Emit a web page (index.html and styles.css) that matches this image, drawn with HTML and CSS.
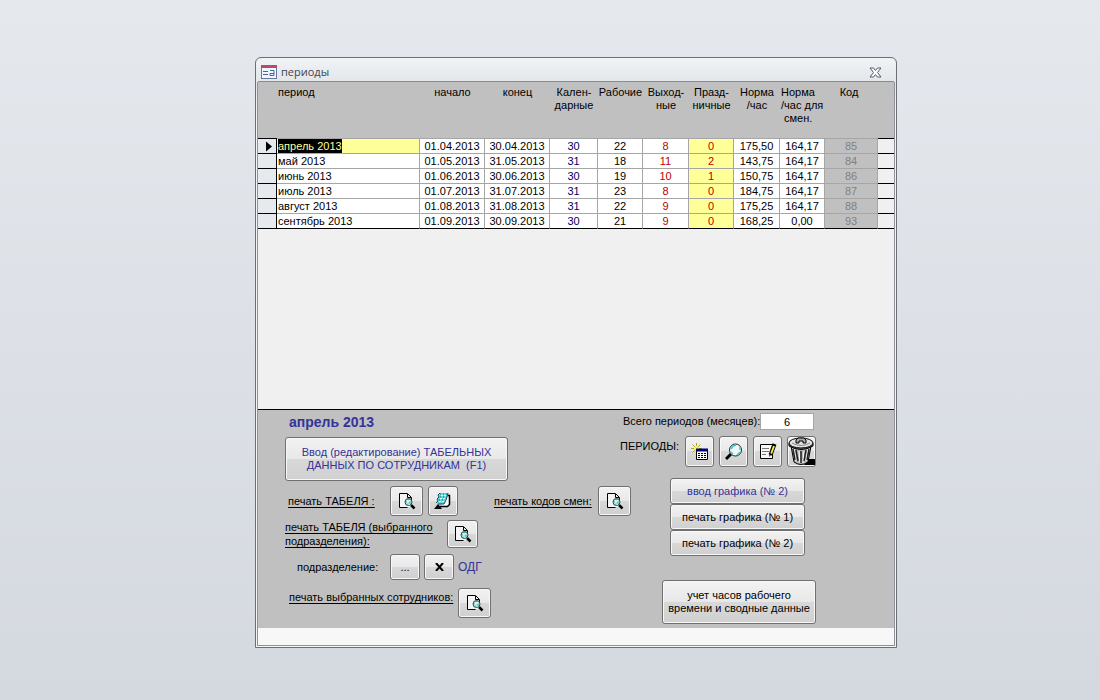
FILE: index.html
```html
<!DOCTYPE html>
<html lang="ru">
<head>
<meta charset="utf-8">
<title>периоды</title>
<link rel="stylesheet" href="styles.css">
</head>
<body>
<svg class="defs" aria-hidden="true">
  <symbol id="preview" viewBox="0 0 18 18">
    <path d="M1.500 1.500H9.500L13.500 5.500V8M1.500 1.500V15.500H9.500" fill="none" stroke="#000"/>
    <path d="M2 2H9V6H13V15H2Z" fill="#f4f4f4"/>
    <path d="M9.500 2V5.500H13" fill="none" stroke="#000"/>
    <path d="M13 13L16.500 16.500" stroke="#000" stroke-width="2.500"/>
    <circle cx="10.500" cy="10" r="3.500" fill="#a9dedd" stroke="#2c4b4b"/>
    <path d="M8 11L12 8M9 8H10M11 12H12" stroke="#fff"/>
    <path d="M9 7.500H12M8 10H9M11 11H13" stroke="#18b9b9"/>
  </symbol>
</svg>
<main class="window">
  <header class="titlebar">
    <svg class="form-icon" viewBox="0 0 16 14" aria-hidden="true">
      <rect x=".5" y=".5" width="15" height="13" fill="#f2f6fd" stroke="#6878a5"/>
      <path d="M0 1.500H16" stroke="#b84a70" stroke-width="3"/>
      <path d="M2 6.500H7M2 9.500H7M9 5.500H13V10.500H9V8.500H13" fill="none" stroke="#42659d"/>
    </svg>
    <h1 class="title">периоды</h1>
    <button class="close" type="button" aria-label="Закрыть">
      <svg viewBox="0 0 13 11" aria-hidden="true"><path d="M1 1H4.500L6.500 3.500L8.500 1H12L8.500 5.500L12 10H8.500L6.500 7.500L4.500 10H1L4.500 5.500Z" fill="#fff" stroke="#55596a"/></svg>
    </button>
  </header>

  <section class="records">
    <table class="grid">
      <colgroup>
        <col class="c-sel"><col class="c-name"><col class="c-date"><col class="c-date"><col class="c-cal"><col class="c-work"><col class="c-off"><col class="c-work"><col class="c-off"><col class="c-work"><col class="c-code"><col>
      </colgroup>
      <thead>
        <tr>
          <th class="sel"></th><th class="name">период</th><th>начало</th><th>конец</th><th>Кален-<br>дарные</th><th>Рабочие</th><th>Выход-<br>ные</th><th>Празд-<br>ничные</th><th>Норма<br>/час</th><th class="left">Норма<br>/час для<br>&nbsp;смен.</th><th class="code">Код</th><th class="rest"></th>
        </tr>
      </thead>
      <tbody>
        <tr><td class="sel"><svg class="marker" viewBox="0 0 6 10" aria-label="Текущая запись"><path d="M0 0L6 5L0 10Z"/></svg></td><td class="name current"><span class="picked">апрель 2013</span></td><td>01.04.2013</td><td>30.04.2013</td><td class="cal">30</td><td>22</td><td class="off">8</td><td class="off hol">0</td><td>175,50</td><td>164,17</td><td class="code">85</td><td class="rest"></td></tr>
        <tr><td class="sel"></td><td class="name">май 2013</td><td>01.05.2013</td><td>31.05.2013</td><td class="cal">31</td><td>18</td><td class="off">11</td><td class="off hol">2</td><td>143,75</td><td>164,17</td><td class="code">84</td><td class="rest"></td></tr>
        <tr><td class="sel"></td><td class="name">июнь 2013</td><td>01.06.2013</td><td>30.06.2013</td><td class="cal">30</td><td>19</td><td class="off">10</td><td class="off hol">1</td><td>150,75</td><td>164,17</td><td class="code">86</td><td class="rest"></td></tr>
        <tr><td class="sel"></td><td class="name">июль 2013</td><td>01.07.2013</td><td>31.07.2013</td><td class="cal">31</td><td>23</td><td class="off">8</td><td class="off hol">0</td><td>184,75</td><td>164,17</td><td class="code">87</td><td class="rest"></td></tr>
        <tr><td class="sel"></td><td class="name">август 2013</td><td>01.08.2013</td><td>31.08.2013</td><td class="cal">31</td><td>22</td><td class="off">9</td><td class="off hol">0</td><td>175,25</td><td>164,17</td><td class="code">88</td><td class="rest"></td></tr>
        <tr><td class="sel"></td><td class="name">сентябрь 2013</td><td>01.09.2013</td><td>30.09.2013</td><td class="cal">30</td><td>21</td><td class="off">9</td><td class="off hol">0</td><td>168,25</td><td>0,00</td><td class="code">93</td><td class="rest"></td></tr>
      </tbody>
    </table>
  </section>

  <section class="panel">
    <div class="left-side">
      <h2 class="period">апрель 2013</h2>
      <button class="btn entry" type="button">Ввод (редактирование) ТАБЕЛЬНЫХ<br>ДАННЫХ ПО СОТРУДНИКАМ &nbsp;(F1)</button>
      <div class="row">
        <span class="label link w-sheet" id="l1">печать ТАБЕЛЯ :</span>
        <button class="btn icon" type="button" aria-labelledby="l1"><svg class="glyph"><use href="#preview"/></svg></button>
        <button class="btn icon note" type="button" aria-label="Блокнот">
          <svg class="glyph" viewBox="0 0 18 18"><path d="M14 3.500H15.500V12.500L13.500 14.500H6" fill="#fff" stroke="#000" stroke-width="1.500"/><path d="M6 1H14L13 5L10 12H3L4 6Z" fill="#5bdadd"/><path d="M6 1L4 3L5 5L3 7L4 9L2 11M14 1L13 5L12 8L10 12H4" fill="none" stroke="#154d58"/><path d="M7 3.500H12M6 6.500H11M5 9.500H10" stroke="#fff" stroke-dasharray="2 1"/><path d="M6 2H13M6 5H12M5 8H11" stroke="#166f79" stroke-dasharray="1 2"/><path d="M0 17L4 12L8 17Z"/></svg>
        </button>
        <span class="label link codes" id="l2">печать кодов смен:</span>
        <button class="btn icon" type="button" aria-labelledby="l2"><svg class="glyph"><use href="#preview"/></svg></button>
      </div>
      <div class="row">
        <span class="label link w-dept" id="l3">печать ТАБЕЛЯ (выбранного<br>подразделения):</span>
        <button class="btn icon short" type="button" aria-labelledby="l3"><svg class="glyph"><use href="#preview"/></svg></button>
      </div>
      <div class="row dept">
        <span class="label w-pick">подразделение:</span>
        <button class="btn icon low" type="button" aria-label="Выбрать подразделение">...</button>
        <button class="btn icon low" type="button" aria-label="Очистить подразделение"><svg class="cross" viewBox="0 0 9 8" aria-hidden="true"><path d="M1 0L8 8M8 0L1 8" stroke="#000" stroke-width="2"/></svg></button>
        <output class="unit">ОДГ</output>
      </div>
      <div class="row top">
        <span class="label link w-staff" id="l4">печать выбранных сотрудников:</span>
        <button class="btn icon" type="button" aria-labelledby="l4"><svg class="glyph"><use href="#preview"/></svg></button>
      </div>
    </div>

    <div class="right-side">
      <div class="total">
        <label for="total">Всего периодов (месяцев):</label>
        <input id="total" class="count" type="text" value="6" readonly>
      </div>
      <div class="tools">
        <span class="tools-label">ПЕРИОДЫ:</span>
        <button class="btn tool" type="button" aria-label="Новый период">
          <svg class="glyph" viewBox="0 0 18 18"><path d="M5.500 0V11M0 5.500H11M1.500 1.500L9.500 9.500M9.500 1.500L1.500 9.500" stroke="#a9a928"/><path d="M5.500 3V8M3 5.500H8" stroke="#fff36b" stroke-width="2"/><path d="M5.500 6.500H16.500V16.500H5.500Z" fill="#fff" stroke="#000"/><path d="M5 7H17" stroke="#000078" stroke-width="3"/><path d="M7 10.500H16M7 12.500H16M7 14.500H16" stroke="#000" stroke-dasharray="2 1"/></svg>
        </button>
        <button class="btn tool" type="button" aria-label="Поиск">
          <svg class="glyph" viewBox="0 0 18 18"><path d="M1 16L6 11" stroke="#000" stroke-width="3"/><circle cx="10.500" cy="7" r="6" fill="#eef8f8" stroke="#1c2929"/><path d="M6 6L8 3L11 2M12 12L15 9M6 9L8 11M15 4V7" fill="none" stroke="#37cbd0" stroke-width="1.500"/></svg>
        </button>
        <button class="btn tool" type="button" aria-label="Изменить">
          <svg class="glyph" viewBox="0 0 18 18"><path d="M1.500 1.500H13.500V15.500H1.500Z" fill="#f8f8f8" stroke="#000"/><path d="M3 5.500H10M3 8.500H10M3 11.500H7" stroke="#777"/><path d="M15.500 1L11.500 12" stroke="#000" stroke-width="4"/><path d="M15 3L12 11" stroke="#f5ed43" stroke-width="2"/><path d="M10 14L11 10L13 11Z"/></svg>
        </button>
        <button class="btn tool" type="button" aria-label="Удалить">
          <svg class="bin" viewBox="0 0 28 29"><path d="M20 22H27V28H16Z"/><path d="M3 9L6 25Q13 30 20 25L23 9Z" fill="#b4b4b4" stroke="#000"/><path d="M6 12L8 24M11 14L12 26M16 14L15 26M20 12L18 24" stroke="#fff"/><path d="M8 13L10 24M13 14V26M18 13L16 24M5 12L7 23M21 12L19 23" stroke="#222" stroke-width="1.500"/><path d="M1 6V9Q13 16 25 9V6Z" fill="#777" stroke="#000"/><ellipse cx="13" cy="6" rx="12" ry="5" fill="#e2e2e2" stroke="#000"/><path d="M4 6Q13 11 22 6" fill="none" stroke="#888"/><path d="M8 6V3L10 1H16L18 3V6H15V4H11V6Z" fill="#aaa" stroke="#000"/></svg>
        </button>
      </div>
      <div class="charts">
        <button class="btn blue" type="button">ввод графика (№ 2)</button>
        <button class="btn" type="button">печать графика (№ 1)</button>
        <button class="btn" type="button">печать графика (№ 2)</button>
      </div>
      <button class="btn hours" type="button">учет часов рабочего<br>времени и сводные данные</button>
    </div>
  </section>
  <footer class="status"></footer>
</main>
</body>
</html>
```
FILE: styles.css
```css
* { box-sizing: border-box; }

body {
  margin: 0;
  min-height: 100vh;
  padding: 57px 203px 52px 255px;
  background: linear-gradient(#e5e9ee, #d4d8df);
  font: 11px/13px "Liberation Sans", Arial, sans-serif;
  color: #000;
}

.defs { position: absolute; width: 0; height: 0; }

.window {
  min-width: 642px;
  padding: 0 2px 2px;
  border: 1px solid #687079;
  border-radius: 6px 6px 0 0;
  background: linear-gradient(#f1f3f5, #e3e6ea 24px, #f4f5f7 60px);
}

.titlebar {
  display: flex;
  align-items: center;
  height: 24px;
  padding: 5px 12px 0 3px;
  border-bottom: 1px solid #868c98;
}

.form-icon { width: 16px; height: 14px; }

.title {
  flex: 1;
  margin: 0 0 0 4px;
  font: 11px/16px "Open Sans", sans-serif;
  color: #40444c;
}

.close { padding: 0; border: 0; background: none; }
.close svg { display: block; width: 13px; height: 11px; }

.records {
  min-height: 328px;
  background: #f0f0f0;
  border-bottom: 1px solid #000;
}

.records,
.panel,
.status {
  outline: 1px solid #8d9299;
}

.records { clip-path: inset(0 -1px); }

.grid {
  width: 100%;
  table-layout: fixed;
  border-collapse: separate;
  border-spacing: 0;
}

.c-sel { width: 19px; }
.c-name { width: 143px; }
.c-date { width: 65px; }
.c-cal { width: 48px; }
.c-work { width: 45px; }
.c-off { width: 46px; }
.c-code { width: 53px; }

.grid th {
  height: 57px;
  padding: 4px 0 0;
  background: #c0c0c0;
  border-bottom: 1px solid #a6a6a6;
  font-weight: normal;
  vertical-align: top;
}

.grid td {
  height: 15px;
  padding: 0;
  background: #fff;
  border-right: 1px solid #a6a6a6;
  border-bottom: 1px solid #a6a6a6;
  font-size: 11px;
  line-height: 14px;
  text-align: center;
}

.grid .name { text-align: left; padding-left: 1px; }
.grid .left { text-align: left; padding-left: 1px; }
.grid .sel { border-color: #000; }
.grid .rest { border-color: #000; }
.grid th.code { padding-right: 5px; }
.grid td.sel { background: #e6e9ee; }
.grid td.rest { background: #f0f0f0; border-right: 0; }
.grid td.code { background: #c0c0c0; color: #808080; }
.grid td.cal { color: #000066; }
.grid td.off { color: #b80000; }
.grid td.hol,
.grid td.current { background: #ffff99; }
.grid tbody tr:last-child td { border-bottom-color: #000; }

.picked { display: block; width: fit-content; background: #000; color: #ffff99; }
.marker { display: block; width: 6px; height: 11px; margin-left: 8px; }

.panel {
  display: grid;
  grid-template-columns: 362px 1fr;
  min-height: 218px;
  background: #c0c0c0;
  clip-path: inset(0 -1px);
}

.left-side { padding: 4px 0 0 27px; }

.period {
  margin: 0 0 7px 4px;
  font-size: 14px;
  line-height: 16px;
  color: #333399;
}

.btn {
  display: flex;
  flex: none;
  align-items: center;
  justify-content: center;
  padding: 0;
  border: 1px solid #707070;
  border-radius: 3px;
  box-shadow: inset 0 0 0 1px #f8f8f8;
  background: linear-gradient(#f2f2f2, #e8e8e8 50%, #d8d8d8 50%, #d0d0d0);
  font: inherit;
  color: #000;
}

.entry, .blue { color: #333399; }
.entry { width: 223px; height: 44px; margin-bottom: 5px; white-space: nowrap; }

.row { display: flex; align-items: center; margin-bottom: 4px; }
.top { align-items: flex-start; }
.label { flex: none; white-space: nowrap; line-height: 14px; }
.link { text-decoration: underline; text-underline-offset: 2px; }
.w-sheet { width: 105px; padding-left: 3px; }
.w-dept { width: 162px; }
.w-pick { width: 105px; padding-left: 12px; }
.w-staff { width: 173px; padding: 2px 0 0 4px; }
.codes { width: 140px; padding-left: 36px; }

.icon { width: 33px; height: 30px; }
.note { width: 30px; margin-left: 5px; }
.short { width: 31px; height: 28px; }
.low { width: 30px; height: 26px; margin-right: 4px; }
.dept { margin: 6px 0 8px; }
.unit { font-size: 12px; color: #333399; }

.glyph { flex: none; width: 18px; height: 18px; }
.cross { width: 9px; height: 8px; }
.bin { flex: none; width: 28px; height: 29px; }

.right-side { padding-top: 3px; }

.total { display: flex; align-items: center; padding-left: 3px; }
.total label { width: 137px; white-space: nowrap; }

.count {
  width: 54px;
  height: 17px;
  padding: 0;
  border: 1px solid #a6a6a6;
  background: #fff;
  font: inherit;
  text-align: center;
}

.tools { display: flex; gap: 5px; margin-top: 6px; }
.tools-label { width: 60px; padding-top: 4px; font-size: 11px; white-space: nowrap; }
.tool { width: 29px; height: 31px; }

.charts { display: grid; width: 135px; margin: 11px 0 24px 50px; }
.charts .btn { height: 26px; }

.hours { width: 154px; height: 44px; margin-left: 42px; white-space: nowrap; }

.status { height: 17px; background: #f7f7f7; clip-path: inset(0 -1px -1px); }
```
